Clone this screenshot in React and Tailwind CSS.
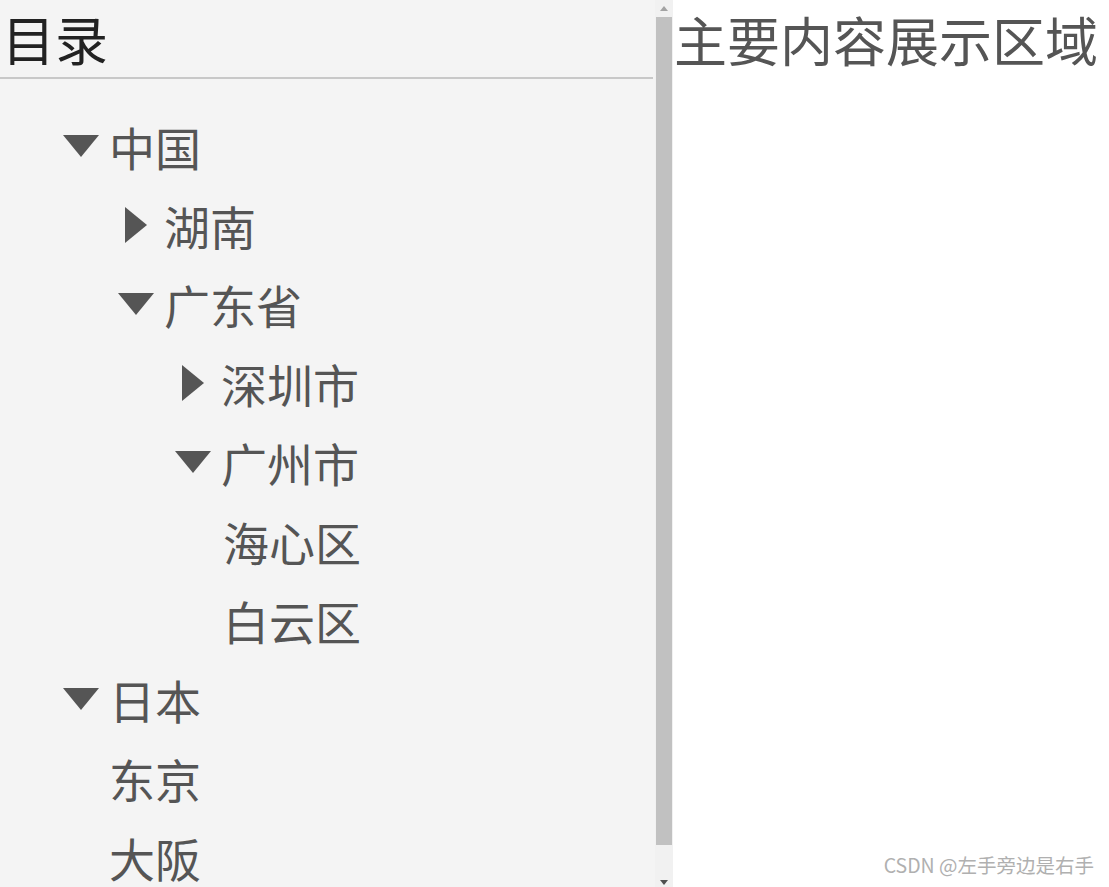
import React from 'react';

const font = { fontFamily: '"Noto Sans CJK SC", "Noto Sans", sans-serif' };

// tree rows, flattened: text x decides indent
const rows = [
  { label: '中国', pad: 'pl-[53px]', state: 'open' },
  { label: '湖南', pad: 'pl-[108px]', state: 'closed' },
  { label: '广东省', pad: 'pl-[108px]', state: 'open' },
  { label: '深圳市', pad: 'pl-[165px]', state: 'closed' },
  { label: '广州市', pad: 'pl-[165px]', state: 'open' },
  { label: '海心区', pad: 'pl-[223px]', state: 'leaf' },
  { label: '白云区', pad: 'pl-[223px]', state: 'leaf' },
  { label: '日本', pad: 'pl-[53px]', state: 'open' },
  { label: '东京', pad: 'pl-[109px]', state: 'leaf' },
  { label: '大阪', pad: 'pl-[109px]', state: 'leaf' },
];

const Marker = ({ open }) => (
  <span className="w-[56px] flex items-center justify-center shrink-0">
    {open ? (
      <svg width="36" height="22" viewBox="0 0 36 22">
        <polygon points="0,0 36,0 18,22" fill="#555555" />
      </svg>
    ) : (
      <svg width="22" height="36" viewBox="0 0 22 36">
        <polygon points="0,0 22,18 0,36" fill="#555555" />
      </svg>
    )}
  </span>
);

const Scrollbar = () => (
  <div className="w-[18px] h-full bg-[#f1f1f1] flex flex-col items-center shrink-0">
    <div className="h-[17px] flex items-center justify-center">
      <svg width="8" height="5" viewBox="0 0 8 5">
        <polygon points="0,5 8,5 4,0" fill="#a3a3a3" />
      </svg>
    </div>
    <div className="w-[16px] h-[828px] bg-[#c1c1c1]" />
    <div className="flex-1 flex items-end justify-center pb-[2px]">
      <svg width="8" height="5" viewBox="0 0 8 5">
        <polygon points="0,0 8,0 4,5" fill="#505050" />
      </svg>
    </div>
  </div>
);

export default function App() {
  return (
    <div className="flex w-[1109px] h-[887px] overflow-hidden bg-white" style={font}>
      <aside className="w-[655px] h-full bg-[#f4f4f4] shrink-0 flex flex-col overflow-hidden">
        <div className="h-[79px] shrink-0 flex items-center pl-[2px] border-b-2 border-[#c8c8c8] mr-[2px]">
          <h1 className="text-[53px] leading-none text-[#222]">目录</h1>
        </div>
        <ul className="pt-[27px] shrink-0">
          {rows.map((r, i) => (
            <li key={i} className={`h-[79px] flex items-center text-[46px] leading-none text-[#555] ${r.pad}`}>
              {r.state !== 'leaf' && <Marker open={r.state === 'open'} />}
              <span>{r.label}</span>
            </li>
          ))}
        </ul>
      </aside>
      <Scrollbar />
      <main className="flex-1 relative">
        <h2 className="h-[79px] flex items-center pl-[1px] text-[53px] leading-none text-[#555] whitespace-nowrap">
          主要内容展示区域
        </h2>
        <div className="absolute right-[15px] bottom-[8px] text-[19.5px] text-[#b0b0b0] whitespace-nowrap">
          CSDN @左手旁边是右手
        </div>
      </main>
    </div>
  );
}
